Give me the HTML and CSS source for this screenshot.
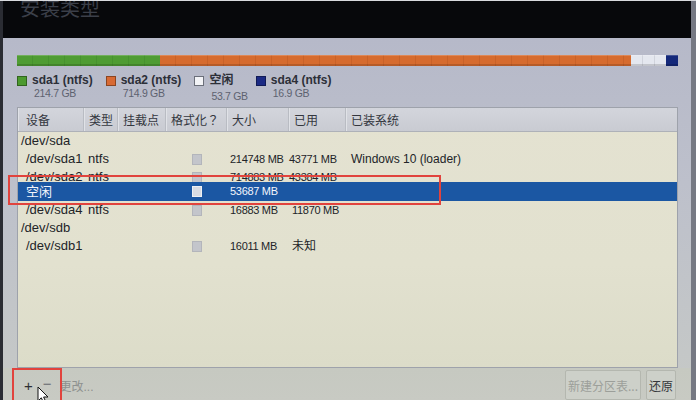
FILE: index.html
```html
<!DOCTYPE html>
<html>
<head>
    <title>安装类型</title>
    <link rel="stylesheet" href="styles.css">
</head>
<body>
    <div class="screen">
        <h1 class="title">安装类型</h1>

        <div class="panel">
            <!-- disk usage bar, widths follow partition sizes -->
            <div class="diskbar">
                <span class="seg seg-green" style="width: 143px;"></span>
                <span class="seg seg-orange" style="width: 471px;"></span>
                <span class="seg seg-free" style="width: 35px;"></span>
                <span class="seg seg-navy" style="width: 12px;"></span>
            </div>

            <div class="legend">
                <div class="legend-item">
                    <span class="swatch swatch-green"></span>
                    <span class="legend-name">sda1 (ntfs)</span>
                    <span class="legend-size">214.7 GB</span>
                </div>
                <div class="legend-item">
                    <span class="swatch swatch-orange"></span>
                    <span class="legend-name">sda2 (ntfs)</span>
                    <span class="legend-size">714.9 GB</span>
                </div>
                <div class="legend-item legend-free">
                    <span class="swatch swatch-free"></span>
                    <span class="legend-name">空闲</span>
                    <span class="legend-size legend-low">53.7 GB</span>
                </div>
                <div class="legend-item">
                    <span class="swatch swatch-navy"></span>
                    <span class="legend-name">sda4 (ntfs)</span>
                    <span class="legend-size">16.9 GB</span>
                </div>
            </div>

            <div class="part-table">
                <div class="row head">
                    <div class="cell first">设备</div>
                    <div class="cell">类型</div>
                    <div class="cell">挂载点</div>
                    <div class="cell">格式化？</div>
                    <div class="cell">大小</div>
                    <div class="cell">已用</div>
                    <div class="cell last">已装系统</div>
                </div>

                <div class="row">
                    <div class="cell dev">/dev/sda</div>
                    <div class="cell"></div>
                    <div class="cell"></div>
                    <div class="cell"></div>
                    <div class="cell"></div>
                    <div class="cell"></div>
                    <div class="cell"></div>
                </div>
                <div class="row">
                    <div class="cell dev sub">/dev/sda1</div>
                    <div class="cell fs">ntfs</div>
                    <div class="cell"></div>
                    <div class="cell check"><span class="box"></span></div>
                    <div class="cell num">214748 MB</div>
                    <div class="cell num used">43771 MB</div>
                    <div class="cell os">Windows 10 (loader)</div>
                </div>
                <div class="row clipped">
                    <div class="cell dev sub">/dev/sda2</div>
                    <div class="cell fs">ntfs</div>
                    <div class="cell"></div>
                    <div class="cell check"><span class="box"></span></div>
                    <div class="cell num">714883 MB</div>
                    <div class="cell num used">43384 MB</div>
                    <div class="cell os"></div>
                </div>
                <div class="row selected">
                    <div class="cell dev sub">空闲</div>
                    <div class="cell"></div>
                    <div class="cell"></div>
                    <div class="cell check"><span class="box"></span></div>
                    <div class="cell num">53687 MB</div>
                    <div class="cell"></div>
                    <div class="cell"></div>
                </div>
                <div class="row">
                    <div class="cell dev sub">/dev/sda4</div>
                    <div class="cell fs">ntfs</div>
                    <div class="cell"></div>
                    <div class="cell check"><span class="box"></span></div>
                    <div class="cell num">16883 MB</div>
                    <div class="cell num">11870 MB</div>
                    <div class="cell"></div>
                </div>
                <div class="row">
                    <div class="cell dev">/dev/sdb</div>
                    <div class="cell"></div>
                    <div class="cell"></div>
                    <div class="cell"></div>
                    <div class="cell"></div>
                    <div class="cell"></div>
                    <div class="cell"></div>
                </div>
                <div class="row">
                    <div class="cell dev sub">/dev/sdb1</div>
                    <div class="cell"></div>
                    <div class="cell"></div>
                    <div class="cell check"><span class="box"></span></div>
                    <div class="cell num">16011 MB</div>
                    <div class="cell unknown">未知</div>
                    <div class="cell"></div>
                </div>
            </div>

            <div class="toolbar">
                <div class="tools-left">
                    <span class="tool-btn plus">+</span>
                    <span class="tool-btn minus">−</span>
                    <span class="tool-btn change">更改...</span>
                </div>
                <div class="tools-right">
                    <button class="btn btn-disabled">新建分区表...</button>
                    <button class="btn">还原</button>
                </div>
            </div>

            <!-- red highlight boxes drawn on top of the screenshot -->
            <div class="mark mark-row"></div>
            <div class="mark mark-tools"></div>
            <svg class="cursor" width="13" height="19" viewBox="0 0 13 19">
                <path d="M1 1 L1 15 L4.3 11.8 L7 17.5 L9.2 16.5 L6.6 11 L11 11 Z" fill="#fff" stroke="#111" stroke-width="1"/>
            </svg>
        </div>
    </div>
</body>
</html>
```

FILE: styles.css
```css
body {
    margin: 0;
    background-color: #07080b;
    font-family: "Liberation Sans", "Noto Sans CJK SC", sans-serif;
    font-size: 12px;
    color: #2b2d33;
}

.screen {
    width: 696px;
    height: 400px;
    overflow: hidden;
    border-top: 1px solid #d8dade;
    box-sizing: border-box;
    background: linear-gradient(90deg, #2a2c33 0, #2a2c33 3px, #07080b 3px, #07080b 691px, #767983 691px);
}

.title {
    margin: -6px 0 0 20px;
    height: 43px;
    font-size: 20px;
    font-weight: normal;
    line-height: 26px;
    color: #3b3f49;
    font-family: "Noto Sans CJK SC", sans-serif;
}

.panel {
    position: relative;
    margin-left: 3px;
    width: 688px;
    height: 362px;
    padding: 17px 13px 0 14px;
    box-sizing: border-box;
    background: linear-gradient(180deg, #b6b9c9 0%, #bdc0cb 40%, #c6c9c6 100%);
}

.diskbar {
    display: flex;
    height: 11px;
}

.seg {
    display: block;
    height: 11px;
    box-shadow: inset 0 1px 0 rgba(255, 255, 255, 0.2), inset 0 -2px 0 rgba(0, 0, 0, 0.15);
}

.seg-green {
    background: repeating-linear-gradient(90deg, #4f9c33 0, #4f9c33 15px, #47922f 15px, #47922f 16px);
}

.seg-orange {
    background: repeating-linear-gradient(90deg, #d66b2e 0, #d66b2e 15px, #c96228 15px, #c96228 16px);
}

.seg-free {
    background: repeating-linear-gradient(90deg, #e4e7ef 0, #e4e7ef 11px, #d0d3dc 11px, #d0d3dc 12px);
}

.seg-navy {
    background-color: #14287a;
}

.legend {
    display: flex;
    margin-top: 8px;
    height: 25px;
}

.legend-item {
    display: grid;
    grid-template-columns: 10px auto;
    column-gap: 5px;
    margin-right: 13px;
    align-items: center;
}

.legend-free {
    margin-right: 8px;
}

.swatch {
    width: 10px;
    height: 10px;
    box-sizing: border-box;
    border: 1px solid rgba(0, 0, 0, 0.35);
}

.swatch-green { background-color: #4c9a2f; }
.swatch-orange { background-color: #d86a34; }
.swatch-free { background-color: #f2f3f6; border-color: #6b6f7a; }
.swatch-navy { background-color: #1b2a84; }

.legend-name {
    font-weight: bold;
    font-size: 12px;
    line-height: 13px;
    color: #2c2f38;
}

.legend-size {
    grid-column: 2;
    font-size: 10.5px;
    line-height: 12px;
    color: #5d6270;
    padding-left: 2px;
    letter-spacing: -0.3px;
}

.legend-low {
    padding-top: 3px;
}

.part-table {
    margin-top: 8px;
    height: 261px;
    box-sizing: border-box;
    border: 1px solid #9ea2ab;
    background: linear-gradient(180deg, #e4e2d1 0%, #e2e1cf 60%, #dcdcc9 100%);
}

.row {
    display: grid;
    grid-template-columns: 66px 34px 48px 61px 62px 57px 1fr;
    height: 18px;
    line-height: 18px;
}

.row.head {
    height: 23px;
    line-height: 23px;
    background: linear-gradient(180deg, #d3d5dc 0%, #c9cbd2 100%);
    border-bottom: 1px solid #aeb1b8;
}

.head .cell {
    padding-left: 5px;
    color: #34373f;
    border-right: 1px solid #b9bcc3;
    box-shadow: inset 1px 0 0 #e0e2e7;
    font-family: "Noto Sans CJK JP", "Noto Sans CJK SC", sans-serif;
    font-size: 12px;
}

.head .first {
    padding-left: 8px;
}

.head .last {
    border-right: none;
}

.cell {
    white-space: nowrap;
    overflow: visible;
    color: #222428;
}

.dev {
    padding-left: 3px;
    font-size: 13px;
}

.dev.sub {
    padding-left: 8px;
}

.fs {
    padding-left: 4px;
    font-size: 13px;
}

.num {
    padding-left: 3px;
    font-size: 11px;
    letter-spacing: -0.3px;
}

.row .used {
    padding-left: 0;
}

.os {
    padding-left: 5px;
}

.unknown {
    padding-left: 3px;
}

.check {
    display: flex;
    justify-content: center;
    align-items: center;
}

.box {
    display: block;
    width: 10px;
    height: 11px;
    margin-left: 1px;
    background-color: #c3c5cb;
    border: 1px solid #b3b5bb;
    box-sizing: border-box;
}

.row.clipped {
    height: 14px;
    overflow: hidden;
}

.row.selected {
    height: 19px;
    line-height: 19px;
    background-color: #1b57a3;
}

.selected .cell {
    color: #f2f5fb;
}

.selected .box {
    background-color: #d9dce3;
    border-color: #eef0f4;
}

.toolbar {
    display: flex;
    justify-content: space-between;
    height: 33px;
    margin: 0 -13px 0 -14px;
    padding: 1px 15px 0 13px;
    box-sizing: border-box;
    background: linear-gradient(180deg, #c6c9c1 0%, #c8cac3 100%);
}

.tools-left {
    display: flex;
    align-items: center;
    padding-left: 8px;
}

.tool-btn {
    display: block;
    font-size: 15px;
    color: #6a6d72;
}

.plus {
    color: #2d2f33;
    margin-right: 10px;
}

.minus {
    margin-top: -3px;
}

.change {
    font-size: 12px;
    color: #8e918f;
    margin-left: 8px;
}

.tools-right {
    display: flex;
    align-items: center;
    gap: 5px;
}

.btn {
    height: 30px;
    padding: 0 2px;
    font-family: "Noto Sans CJK SC", sans-serif;
    font-size: 12px;
    color: #34363a;
    background-color: #cdd0c9;
    border: 1px solid #b4b7af;
    border-radius: 2px;
}

.btn-disabled {
    color: #9c9f9a;
}

.mark {
    position: absolute;
    border: 2px solid #e1433d;
    box-sizing: border-box;
}

.mark-row {
    left: 5px;
    top: 137px;
    width: 433px;
    height: 30px;
}

.mark-tools {
    left: 9px;
    top: 330px;
    width: 50px;
    height: 40px;
}

.cursor {
    position: absolute;
    left: 34px;
    top: 348px;
}
```
